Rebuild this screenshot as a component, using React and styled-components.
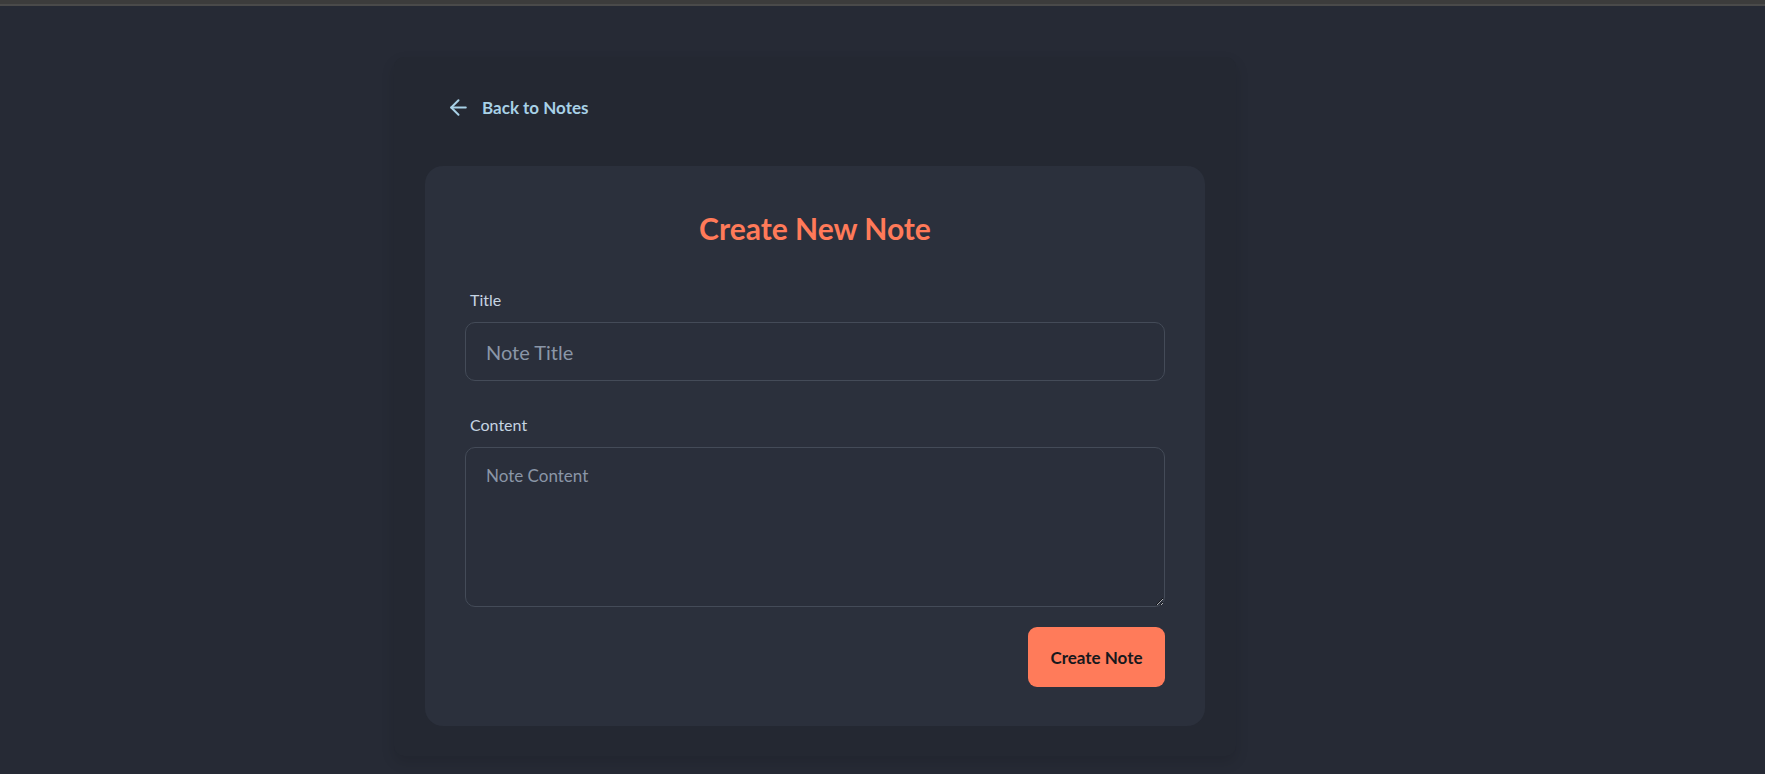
import styled, { createGlobalStyle } from "styled-components";
import { ArrowLeft } from "lucide-react";

const GlobalStyle = createGlobalStyle`
  html, body {
    margin: 0;
    background: #262a35;
    font-family: Lato, "Noto Sans", sans-serif;
  }
  * { box-sizing: border-box; }
`;

const TopBar = styled.div`
  height: 6px;
  background: #3c3c3c;
  border-bottom: 2px solid #4a4a4a;
`;

const Page = styled.div`
  padding: 51px 0 0 394px;
  min-height: 768px;
`;

const Wrapper = styled.div`
  width: 842px;
  padding: 37px 31px 30px;
  background: #242832;
  border-radius: 10px;
  box-shadow: 0 6px 14px rgba(0, 0, 0, 0.12);
`;

const BackLink = styled.a`
  display: flex;
  width: fit-content;
  align-items: center;
  gap: 11px;
  margin-left: 21px;
  height: 26px;
  color: #a8d1e7;
  font-size: 17px;
  font-weight: 700;
  text-decoration: none;
  cursor: pointer;
`;

const Card = styled.form`
  margin-top: 46px;
  background: #2b303c;
  border-radius: 18px;
  padding: 43px 40px 39px;
  display: flex;
  flex-direction: column;
`;

const Heading = styled.h2`
  margin: 0 0 41px;
  text-align: center;
  color: #ff7a59;
  font-size: 30px;
  font-weight: 700;
  line-height: 38px;
`;

const Field = styled.div`
  display: flex;
  flex-direction: column;
  gap: 10px;
  margin-bottom: ${(p) => p.$gap || 0}px;
`;

const Label = styled.label`
  padding-left: 5px;
  color: #c6d4e2;
  font-size: 16px;
  line-height: 24px;
`;

const Input = styled.input`
  height: 59px;
  padding: 0 20px;
  background: #2a2f3b;
  border: 1px solid #444b58;
  border-radius: 10px;
  color: #dfe6ee;
  font-family: inherit;
  font-size: 20px;
  outline: none;
  &::placeholder { color: #8a96a7; }
`;

const TextArea = styled.textarea`
  height: 160px;
  padding: 17px 20px;
  background: #2a2f3b;
  border: 1px solid #444b58;
  border-radius: 10px;
  color: #dfe6ee;
  font-family: inherit;
  font-size: 17px;
  outline: none;
  resize: vertical;
  &::placeholder { color: #8a96a7; }
`;

const Actions = styled.div`
  display: flex;
  justify-content: flex-end;
  margin-top: 20px;
`;

const Button = styled.button`
  width: 137px;
  height: 60px;
  border: none;
  border-radius: 9px;
  background: #ff7b5a;
  color: #16181d;
  font-family: inherit;
  font-size: 17px;
  font-weight: 700;
  cursor: pointer;
`;

export default function App() {
  return (
    <>
      <GlobalStyle />
      <TopBar />
      <Page>
        <Wrapper>
          <BackLink>
            <ArrowLeft size={25} strokeWidth={1.9} />
            Back to Notes
          </BackLink>
          <Card onSubmit={(e) => e.preventDefault()}>
            <Heading>Create New Note</Heading>
            <Field $gap={32}>
              <Label htmlFor="title">Title</Label>
              <Input id="title" placeholder="Note Title" />
            </Field>
            <Field>
              <Label htmlFor="content">Content</Label>
              <TextArea id="content" placeholder="Note Content" />
            </Field>
            <Actions>
              <Button type="submit">Create Note</Button>
            </Actions>
          </Card>
        </Wrapper>
      </Page>
    </>
  );
}
